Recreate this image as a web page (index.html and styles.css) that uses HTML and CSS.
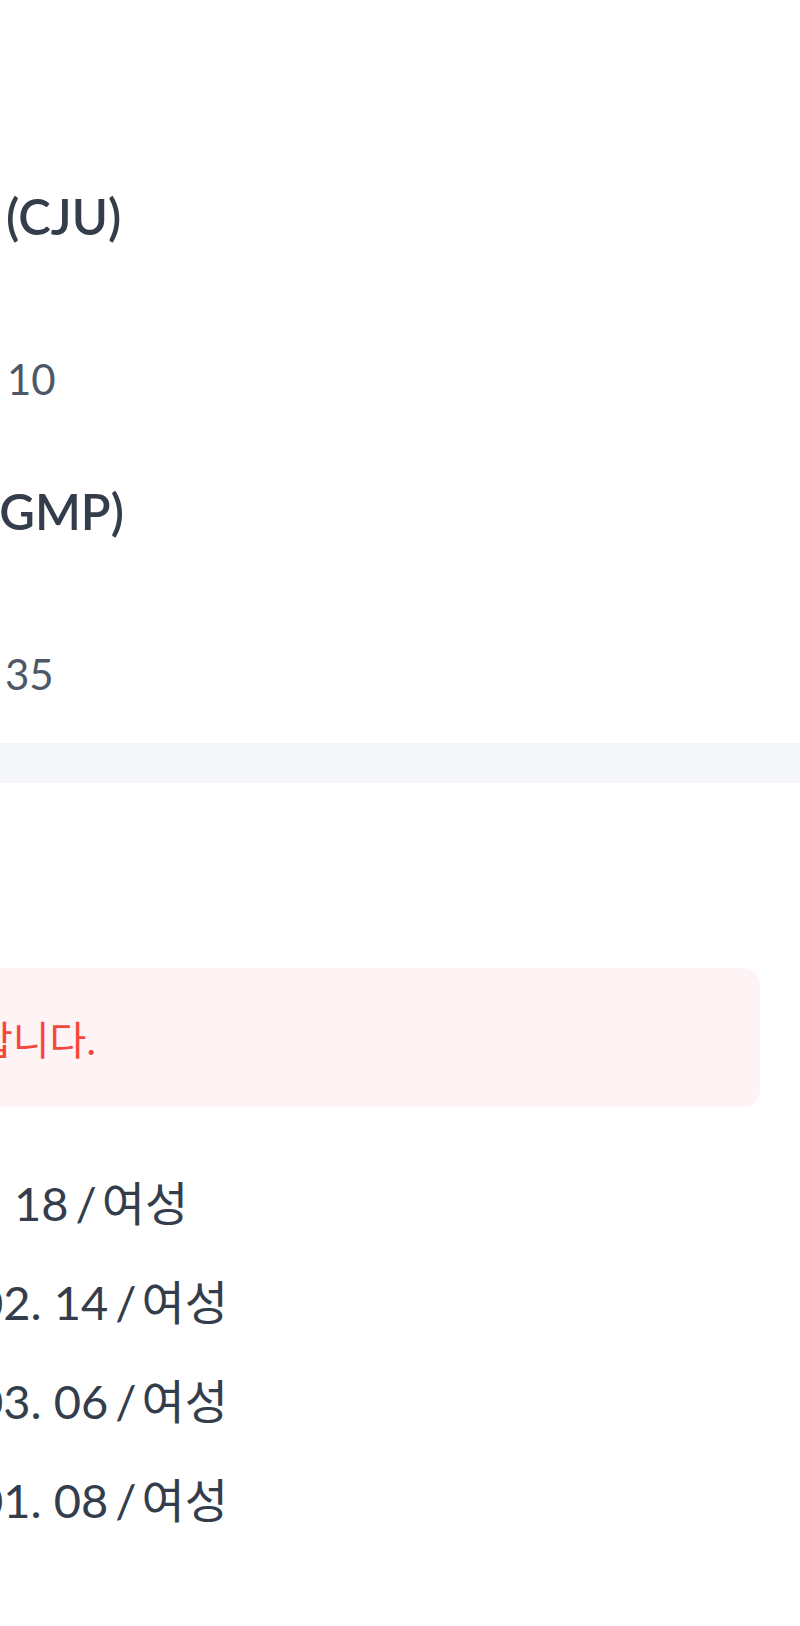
FILE: index.html
```html
<!DOCTYPE html>
<html lang="ko">
<head>
<meta charset="utf-8">
<title>예약 정보</title>
<link rel="stylesheet" href="styles.css">
</head>
<body>
<main class="page">
  <section class="journey">
    <div class="stop">
      <p class="place">(CJU)</p>
      <p class="time">10</p>
    </div>
    <div class="stop">
      <p class="place place--cut">(GMP)</p>
      <p class="time time--cut">35</p>
    </div>
  </section>
  <div class="divider"></div>
  <section class="passengers">
    <div class="notice"><p class="notice-text">합니다.</p></div>
    <ul class="pax-list">
      <li class="pax pax--first">18 <span class="sep">/</span> 여성</li>
      <li class="pax">02. 14 <span class="sep">/</span> 여성</li>
      <li class="pax">03. 06 <span class="sep">/</span> 여성</li>
      <li class="pax">01. 08 <span class="sep">/</span> 여성</li>
    </ul>
  </section>
</main>
</body>
</html>
```

FILE: styles.css
```css
html, body {
  margin: 0;
  padding: 0;
  background: #ffffff;
}
body {
  font-family: Lato, "Noto Sans CJK KR", sans-serif;
  overflow: hidden;
}
.page {
  width: 800px;
  height: 1626px;
  overflow: hidden;
}
.journey {
  display: flex;
  flex-direction: column;
  gap: 72px;
  padding-top: 186px;
}
.stop {
  display: flex;
  flex-direction: column;
  gap: 103px;
}
.place {
  margin: 0;
  padding-left: 6px;
  font-size: 49px;
  font-weight: 600;
  line-height: 60px;
  color: #333d4b;
  white-space: nowrap;
}
.place--cut {
  padding-left: 0;
  text-indent: -13px;
}
.time {
  margin: 0;
  padding-left: 7px;
  font-size: 42px;
  line-height: 60px;
  color: #4e5968;
  white-space: nowrap;
}
.time--cut {
  padding-left: 5px;
}
.divider {
  margin-top: 39px;
  height: 40px;
  background: #f5f6fa;
}
.passengers {
  padding-top: 185px;
}
.notice {
  display: flex;
  align-items: center;
  width: 800px;
  height: 139px;
  margin-left: -40px;
  border-radius: 16px;
  background: #fff4f5;
}
.notice-text {
  margin: 0;
  padding-left: 16px;
  font-size: 40px;
  color: #f4473b;
  white-space: nowrap;
}
.pax-list {
  display: flex;
  flex-direction: column;
  gap: 39px;
  margin: 66px 0 0;
  padding: 0;
  list-style: none;
}
.pax {
  font-size: 47px;
  line-height: 60px;
  color: #333d4b;
  text-indent: -24px;
  white-space: nowrap;
}
.pax--first {
  text-indent: 14px;
}
.sep {
  margin: 0 -7px 0 -5px;
}
```
